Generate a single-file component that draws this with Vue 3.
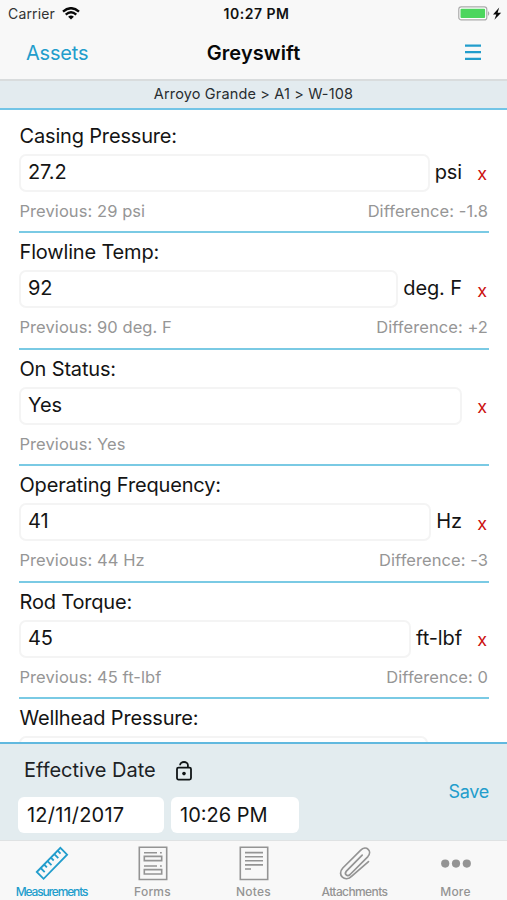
<script setup>
const measurements = [
  { key: 'casing', label: 'Casing Pressure:', value: '27.2', unit: 'psi', previous: '29 psi', difference: '-1.8' },
  { key: 'flowline', label: 'Flowline Temp:', value: '92', unit: 'deg. F', previous: '90 deg. F', difference: '+2' },
  { key: 'status', label: 'On Status:', value: 'Yes', unit: '', previous: 'Yes', difference: '' },
  { key: 'frequency', label: 'Operating Frequency:', value: '41', unit: 'Hz', previous: '44 Hz', difference: '-3' },
  { key: 'torque', label: 'Rod Torque:', value: '45', unit: 'ft-lbf', previous: '45 ft-lbf', difference: '0' },
]
</script>

<template>
  <div class="screen">
    <header class="top">
      <div class="status-bar">
        <div class="carrier">
          <span>Carrier</span>
          <svg class="wifi" width="18" height="13" viewBox="0 0 18 13">
            <path d="M1 4.6Q9-2.2 17 4.6" fill="none" stroke="#080808" stroke-width="2.4" />
            <path d="M3.7 7.6Q9 3 14.3 7.6" fill="none" stroke="#080808" stroke-width="2.3" />
            <path d="M6.1 9.7Q9 7.3 11.9 9.7L9 12.6Z" fill="#080808" />
          </svg>
        </div>
        <div class="clock">10:27 PM</div>
        <svg class="battery" width="44" height="16" viewBox="0 0 44 16">
          <rect x=".8" y=".9" width="28" height="13" rx="2.5" fill="#fff" stroke="#aaa" stroke-width="1.2" />
          <rect x="2.5" y="2.7" width="24.6" height="9.4" rx="1" fill="#4cd65e" />
          <path d="M30 4.9q2.6 2.5 0 5z" fill="#aaa" />
          <path d="M41.2 1.4L35 8.4h3.3l-1.9 5.4L43.2 6.7h-3.6z" fill="#0a0a0a" />
        </svg>
      </div>
      <nav class="nav">
        <div class="back">Assets</div>
        <h1>Greyswift</h1>
        <svg class="menu" width="16" height="17" viewBox="0 0 16 17">
          <path d="M0 1.6h16M0 8.2h16M0 14.8h16" stroke="#229dcc" stroke-width="2.2" />
        </svg>
      </nav>
    </header>
    <div class="crumbs">Arroyo Grande &gt; A1 &gt; W-108</div>

    <main class="list">
      <section v-for="m in measurements" :key="m.key" class="record">
        <div class="label">{{ m.label }}</div>
        <div class="row">
          <div class="field">{{ m.value }}</div>
          <div v-if="m.unit" class="unit">{{ m.unit }}</div>
          <div class="clear">x</div>
        </div>
        <div class="history">
          <span>Previous: {{ m.previous }}</span>
          <span v-if="m.difference">Difference: {{ m.difference }}</span>
        </div>
      </section>
      <section class="record">
        <div class="label">Wellhead Pressure:</div>
        <div class="row"><div class="field next"></div></div>
      </section>
    </main>

    <section class="effective">
      <div>
        <div class="effective-title">
          <span>Effective Date</span>
          <svg width="16" height="20" viewBox="0 0 16 20">
            <rect x="1" y="6.6" width="14" height="12" rx="1.5" fill="none" stroke="#101517" stroke-width="1.8" />
            <path d="M4.1 4.2V4a3.9 3 0 0 1 7.8 0v3" fill="none" stroke="#101517" stroke-width="1.8" />
            <circle cx="8" cy="12.6" r="1.8" fill="#101517" />
          </svg>
        </div>
        <div class="date-row">
          <div class="picker date">12/11/2017</div>
          <div class="picker time">10:26 PM</div>
        </div>
      </div>
      <div class="save">Save</div>
    </section>

    <footer class="tabs">
      <div class="tab active measurements">
        <svg width="34" height="36" viewBox="0 0 34 36" fill="none" stroke="currentColor" stroke-width="1.8">
          <path d="M1.8 26L25.4 1.9l6.7 6.8L8.6 32.8z" />
          <path d="M5.7 22l4 4.1M9.1 18.5l2.8 2.9M12.5 15.1l4 4.1M15.9 11.6l2.8 2.9M19.3 8.1l4 4.1M22.7 4.7l2.8 2.9" />
        </svg>
        <span>Measurements</span>
      </div>
      <div class="tab forms">
        <svg width="30" height="36" viewBox="0 0 30 36" fill="none" stroke="currentColor" stroke-width="1.6">
          <path d="M1.3 1.2h27.4v32.3H1.3z" />
          <path d="M6.3 10.4h17.4v4.2H6.3zM6.3 23.6h17.4v4.4H6.3zM6 6.8h13M22 6.8h1.8M6 20h13M22 20h1.8" />
        </svg>
        <span>Forms</span>
      </div>
      <div class="tab notes">
        <svg width="30" height="36" viewBox="0 0 30 36" fill="none" stroke="currentColor" stroke-width="1.6">
          <path d="M1.3 1.2h27.4v32.3H1.3z" />
          <path d="M6 6.6h18M6 10.7h18M6 14.8h18M6 18.9h18M6 23h6" />
        </svg>
        <span>Notes</span>
      </div>
      <div class="tab attachments">
        <svg width="34" height="36" viewBox="0 0 34 36" fill="none" stroke="currentColor" stroke-width="1.7" stroke-linecap="round">
          <path d="M24.2 9.2L8.4 25.1c-2.6 3 .8 6 3.7 3.4L29.7 10.8c5.2-5.8-1.6-12-7.2-6.5L4.8 22c-6.4 6.9 2.3 14.8 9 8.1L30.5 15.6" />
        </svg>
        <span>Attachments</span>
      </div>
      <div class="tab more">
        <svg width="30" height="36" viewBox="0 0 30 36" fill="currentColor">
          <circle cx="4.2" cy="17.6" r="4.1" /><circle cx="15" cy="17.6" r="4.1" /><circle cx="25.8" cy="17.6" r="4.1" />
        </svg>
        <span>More</span>
      </div>
    </footer>
  </div>
</template>

<style>
body { margin: 0; }
</style>

<style scoped>
* { box-sizing: border-box; }
.screen { width: 507px; height: 900px; overflow: hidden; display: flex; flex-direction: column; background: #fff; font-family: Inter, sans-serif; color: #141414; font-size: 20px; }
.top { height: 81px; flex: none; background: #f8f8f8; border-bottom: 2px solid #d9dcdd; }
.status-bar { height: 27px; padding: 0 5px 0 8px; display: grid; grid-template-columns: 1fr auto 1fr; align-items: center; font-size: 14px; }
.carrier { display: flex; align-items: center; gap: 7px; color: #333; letter-spacing: 0.15px; }
.wifi { margin-top: -1px; }
.clock { font-weight: 600; font-size: 14px; letter-spacing: 0.5px; color: #111; padding-left: 3px; }
.battery { justify-self: end; }
.nav { height: 51px; padding: 0 26px; display: grid; grid-template-columns: 1fr auto 1fr; align-items: center; }
.back { color: #229dcc; letter-spacing: -0.2px; }
h1 { margin: 0; font-size: 20px; font-weight: 600; letter-spacing: 0.1px; color: #080808; }
.menu { justify-self: end; }
.crumbs { height: 29px; flex: none; background: #e3ebef; border-bottom: 2px solid #72c4e6; text-align: center; line-height: 26px; font-size: 14.5px; letter-spacing: 0.15px; color: #282d30; }
.list { flex: 1; min-height: 0; overflow: hidden; padding: 6.5px 18px 0 19px; }
.record { height: 116.5px; border-bottom: 2px solid #7acae4; padding-top: 7px; }
.label { height: 30px; line-height: 25.5px; padding-left: 0.5px; letter-spacing: -0.17px; }
.row { height: 38px; display: flex; align-items: center; }
.field { flex: 1; height: 38px; border: 2px solid #f4f4f4; border-radius: 7px; padding-left: 7px; line-height: 33.5px; letter-spacing: -0.1px; }
.field.next { margin-right: 61px; }
.unit { margin-left: 5px; letter-spacing: -0.1px; line-height: 37.5px; height: 38px; }
.clear { width: 27px; text-align: right; padding-right: 2px; color: #cc1111; font-size: 18px; padding-top: 2px; }
.history { display: flex; justify-content: space-between; padding: 0 1px 0 0.5px; font-size: 16.5px; letter-spacing: 0.07px; line-height: 38px; color: #969696; }
.effective { height: 98px; flex: none; background: #e3ecef; border-top: 2px solid #61b9df; padding: 0 18px; display: flex; justify-content: space-between; }
.effective-title { height: 53px; padding-left: 6px; display: flex; align-items: center; gap: 20px; color: #1c2225; }
.effective-title span { margin-top: -2px; }
.date-row { display: flex; gap: 7px; }
.picker { height: 36px; line-height: 37px; background: #fff; border-radius: 6px; padding-left: 9px; }
.date { width: 146px; letter-spacing: 0.2px; }
.time { width: 128px; }
.save { color: #229dcc; font-size: 18px; letter-spacing: -0.3px; line-height: 96px; }
.tabs { height: 60px; flex: none; background: #f8f8f8; border-top: 1px solid #dfe2e3; display: flex; padding-left: 1px; }
.tab { width: 101px; display: flex; flex-direction: column; align-items: center; padding-top: 5px; color: #949494; font-size: 12px; font-weight: 500; }
.tab svg { flex: none; }
.tab span { line-height: 20.5px; }
.tab.active { color: #229dcc; }
.forms span, .notes span, .more span { letter-spacing: 0.2px; }
.measurements span { letter-spacing: -1.15px; }
.attachments span { letter-spacing: -0.6px; }
</style>
